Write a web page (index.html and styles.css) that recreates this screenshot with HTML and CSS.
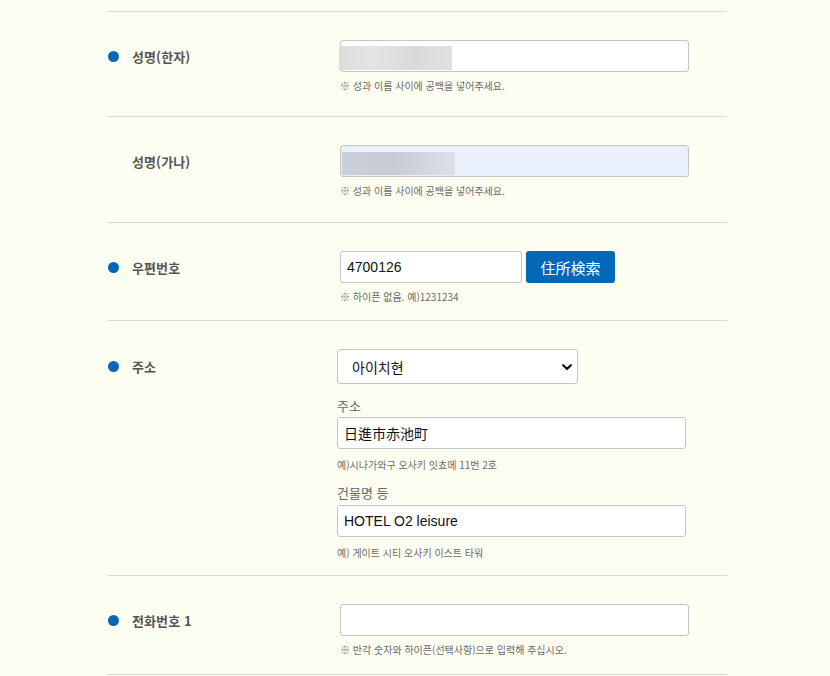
FILE: index.html
```html
<!DOCTYPE html>
<html lang="ko">
<head>
<meta charset="utf-8">
<title>Form</title>
<link rel="stylesheet" href="styles.css">
</head>
<body>
<div class="form">
  <div class="row r1">
    <div class="label"><span class="dot"></span><span class="ltext">성명(한자)</span></div>
    <div class="field">
      <div class="wrap">
        <input class="inp" type="text" value="">
        <div class="blur blur1"></div>
      </div>
      <p class="hint">※ 성과 이름 사이에 공백을 넣어주세요.</p>
    </div>
  </div>
  <div class="row r2">
    <div class="label"><span class="dot hidden"></span><span class="ltext">성명(가나)</span></div>
    <div class="field">
      <div class="wrap">
        <input class="inp auto" type="text" value="">
        <div class="blur blur2"></div>
      </div>
      <p class="hint">※ 성과 이름 사이에 공백을 넣어주세요.</p>
    </div>
  </div>
  <div class="row r3">
    <div class="label"><span class="dot"></span><span class="ltext">우편번호</span></div>
    <div class="field">
      <div class="zipline">
        <input class="inp zip" type="text" value="4700126">
        <button class="btn" type="button">住所検索</button>
      </div>
      <p class="hint">※ 하이픈 없음. 예)1231234</p>
    </div>
  </div>
  <div class="row r4">
    <div class="label lsel"><span class="dot"></span><span class="ltext">주소</span></div>
    <div class="field shift">
      <div class="selwrap">
        <select class="sel"><option>아이치현</option></select>
        <svg class="chev" width="10" height="7" viewBox="0 0 10 7"><path d="M1.2 1.2 L5 5 L8.8 1.2" fill="none" stroke="#111" stroke-width="2.2" stroke-linecap="round" stroke-linejoin="round"/></svg>
      </div>
      <div class="sublabel s1">주소</div>
      <input class="inp wide" type="text" value="日進市赤池町">
      <p class="hint h4">예)시나가와구 오사키 잇쵸메 11번 2호</p>
      <div class="sublabel s2">건물명 등</div>
      <input class="inp wide" type="text" value="HOTEL O2 leisure">
      <p class="hint h4">예) 게이트 시티 오사키 이스트 타워</p>
    </div>
  </div>
  <div class="row r5">
    <div class="label"><span class="dot"></span><span class="ltext">전화번호 1</span></div>
    <div class="field">
      <input class="inp" type="text" value="">
      <p class="hint">※ 반각 숫자와 하이픈(선택사항)으로 입력해 주십시오.</p>
    </div>
  </div>
</div>
</body>
</html>
```
FILE: styles.css
```css
html, body {
  margin: 0;
  padding: 0;
  background: #fdfef2;
}
body {
  width: 830px;
  height: 676px;
  overflow: hidden;
  font-family: "Noto Sans CJK KR", "Noto Sans", sans-serif;
  color: #555;
}
.form {
  margin-left: 107px;
  width: 620px;
  padding-top: 11px;
}
.row {
  display: flex;
  align-items: flex-start;
  border-top: 1px solid #d9d9d6;
}
.r5 { border-bottom: 1px solid #d9d9d6; }
.r1 { padding: 28px 0 23px; }
.r2 { padding: 28px 0 24px; }
.r3 { padding: 28px 0 16px; }
.r4 { padding: 28px 0 15px; }
.r5 { padding: 28px 0 17px; }
.label {
  width: 233px;
  flex: 0 0 233px;
  height: 32px;
  display: flex;
  align-items: center;
}
.lsel { height: 35px; }
.dot {
  width: 11px;
  height: 11px;
  border-radius: 50%;
  background: #0766b6;
  margin: 0 13px 0 1px;
  flex: 0 0 11px;
}
.dot.hidden { visibility: hidden; }
.ltext {
  font-size: 13px;
  font-weight: bold;
  color: #555;
  letter-spacing: 0.1px;
}
.field {
  display: flex;
  flex-direction: column;
  align-items: flex-start;
}
.shift { margin-left: -3px; }
.wrap { position: relative; }
.inp {
  box-sizing: border-box;
  width: 349px;
  height: 32px;
  margin: 0;
  padding: 0 6px;
  border: 1px solid #c6c6c6;
  border-radius: 3px;
  background: #fff;
  font-family: "Liberation Sans", "Noto Sans CJK JP", sans-serif;
  font-size: 14px;
  color: #111;
  outline: none;
}
.inp.auto { background: #e8f0fe; }
.blur {
  position: absolute;
  top: 6px;
  height: 24px;
  width: 113px;
}
.blur1 {
  left: -1px;
  background: linear-gradient(90deg, #dcdcdc 0%, #e4e4e4 30%, #dadada 65%, #e0e0e0 100%);
}
.blur2 {
  left: 2px;
  top: 7px;
  height: 23px;
  background: linear-gradient(90deg, #cbd0db 0%, #c6cbd6 45%, #d6dae3 85%, #dcdfe7 100%);
}
.hint {
  margin: 7px 0 0;
  font-size: 10px;
  line-height: 14px;
  color: #6a6a6a;
  letter-spacing: 0;
  white-space: nowrap;
}
.hint.h4 { margin-top: 9px; }
.zipline {
  display: flex;
  gap: 4px;
}
.inp.zip { width: 182px; }
.btn {
  width: 89px;
  height: 32px;
  border: none;
  border-radius: 3px;
  background: #0068b7;
  color: #fff;
  font-family: "Noto Sans CJK JP", sans-serif;
  font-size: 15px;
  padding: 0;
}
.selwrap {
  position: relative;
  width: 241px;
  height: 35px;
}
.sel {
  appearance: none;
  -webkit-appearance: none;
  box-sizing: border-box;
  width: 241px;
  height: 35px;
  margin: 0;
  padding: 0 0 0 14px;
  border: 1px solid #c6c6c6;
  border-radius: 3px;
  background: #fff;
  font-family: "Noto Sans CJK KR", sans-serif;
  font-size: 14px;
  color: #111;
}
.chev {
  position: absolute;
  right: 6px;
  top: 15px;
}
.sublabel {
  font-size: 13px;
  line-height: 16px;
  color: #666;
}
.s1 { margin-top: 14px; margin-bottom: 3px; }
.s2 { margin-top: 13px; margin-bottom: 4px; }
.inp.wide { width: 349px; }
```
